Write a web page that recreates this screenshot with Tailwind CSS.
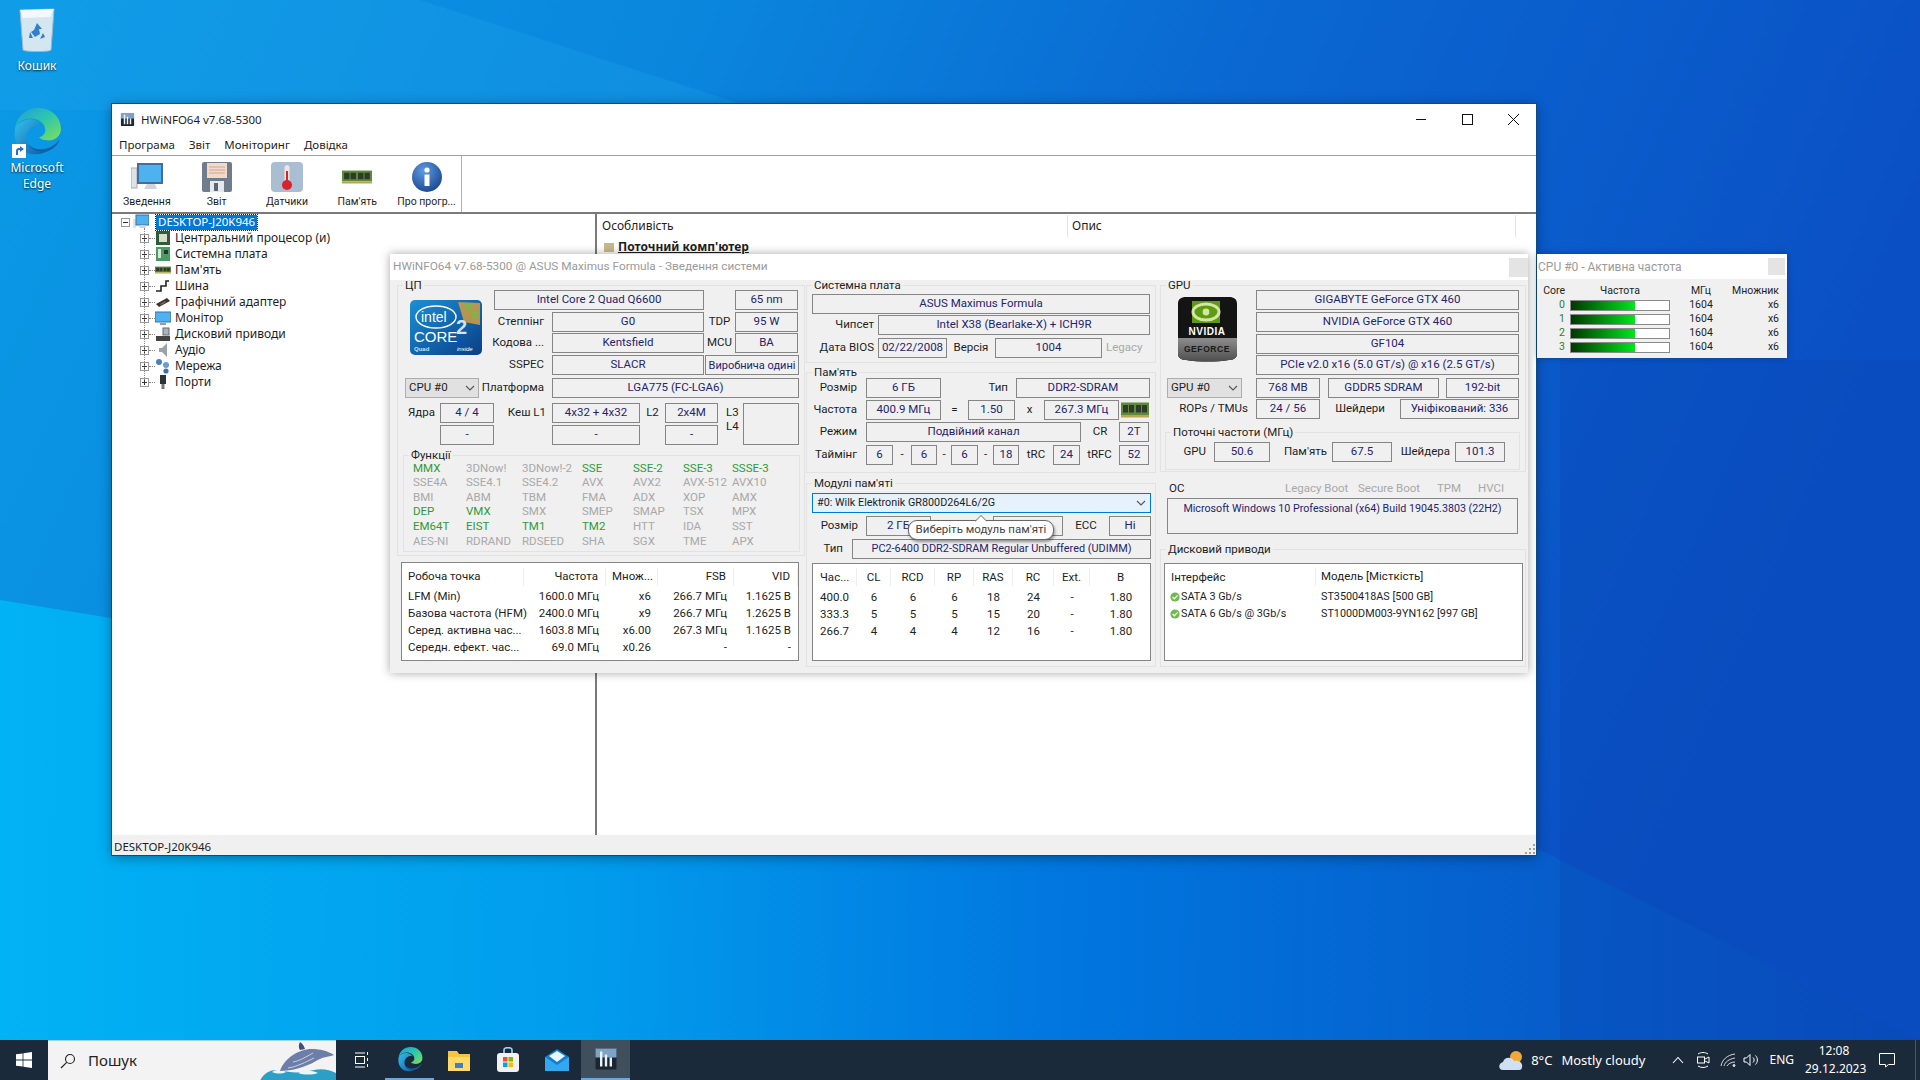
<!DOCTYPE html>
<html>
<head>
<meta charset="UTF-8">
<title>HWiNFO64</title>
<script src="https://cdn.jsdelivr.net/npm/@tailwindcss/browser@4"></script>
</head>
<body class="relative w-[1920px] h-[1080px] overflow-hidden font-['Noto_Sans',sans-serif] text-[12px] leading-none text-[#1e1e1e] bg-[#0a6fd6]">

<!-- shared svg symbols -->
<svg class="absolute w-0 h-0">
  <defs>
    <linearGradient id="edgeA" x1="0" y1="0" x2="1" y2="1"><stop offset="0" stop-color="#35c1f1"/><stop offset="1" stop-color="#0c59a4"/></linearGradient>
    <linearGradient id="edgeB" x1="0" y1="0" x2="1" y2="1"><stop offset="0" stop-color="#1b9de2"/><stop offset=".5" stop-color="#30c7a8"/><stop offset="1" stop-color="#7fe05a"/></linearGradient>
    <symbol id="edge" viewBox="0 0 48 48">
      <path fill="url(#edgeB)" d="M3 21C5 9 14 2 25 2c13 0 22 9 22 20 0 7-6 11-12 11-4 0-8-1-9-3 4-1 6-4 6-7 0-6-6-11-14-11C12 12 6 15 3 21z"/>
      <path fill="url(#edgeA)" d="M3 21c-2 10 2 20 11 24 6 2 13 2 19-1-8 1-15-2-18-8-3-7 0-14 7-17 2-1 5-1 7 0-3-5-9-7-14-6-5 1-10 4-12 8z"/>
      <path fill="#1261a8" d="M33 44c-8 1-15-2-18-8 3 4 10 7 17 5 6-1 10-4 14-9-2 6-7 10-13 12z"/>
    </symbol>
    <symbol id="hw" viewBox="0 0 16 16">
      <rect x="1" y="1" width="14" height="14" rx="1" fill="#1c2530"/>
      <rect x="1" y="1" width="14" height="6" fill="#7ea4c4"/>
      <path fill="#eaf2fa" d="M4 3h1.600v10H4zM7.200 5h1.600v8H7.200zM10.400 7H12v6h-1.600z"/>
    </symbol>
    <symbol id="ram" viewBox="0 0 28 16">
      <rect x="0" y="2" width="28" height="10" fill="#5f8a3c"/>
      <path fill="#2f3b2a" d="M2 4h5v6H2zM8 4h5v6H8zM15 4h5v6h-5zM21 4h5v6h-5z"/>
      <path fill="#b9a650" d="M0 12h28v2H0z"/>
    </symbol>
    <symbol id="check" viewBox="0 0 10 10">
      <circle cx="5" cy="5" r="4.600" fill="#6dbb4a"/>
      <path d="M2.600 5l1.800 1.800L7.600 3.400" fill="none" stroke="#fff" stroke-width="1.300"/>
    </symbol>
    <symbol id="plus" viewBox="0 0 9 9">
      <rect x=".5" y=".5" width="8" height="8" fill="#fff" stroke="#9a9a9a"/>
      <path d="M2 4.500h5M4.500 2v5" stroke="#333"/>
    </symbol>
    <symbol id="chev" viewBox="0 0 10 6">
      <path d="M1 1l4 4 4-4" fill="none" stroke="#555" stroke-width="1.100"/>
    </symbol>
  </defs>
</svg>

<!-- wallpaper -->
<svg class="absolute inset-0" width="1920" height="1080" viewBox="0 0 1920 1080">
  <defs>
    <linearGradient id="wall" x1="0" y1="0" x2="1" y2="0.25">
      <stop offset="0" stop-color="#0a9ae6"/>
      <stop offset=".35" stop-color="#0a86dd"/>
      <stop offset=".62" stop-color="#0a68d2"/>
      <stop offset="1" stop-color="#0a4fc4"/>
    </linearGradient>
    <linearGradient id="low" x1="0" y1="0" x2="1" y2="0">
      <stop offset="0" stop-color="#00b4f5"/>
      <stop offset=".3" stop-color="#009fee"/>
      <stop offset=".55" stop-color="#0078e0"/>
      <stop offset="1" stop-color="#0a4cbc" stop-opacity=".9"/>
    </linearGradient>
  </defs>
  <rect width="1920" height="1080" fill="url(#wall)"/>
  <polygon points="0,600 1540,850 1920,1040 0,1040" fill="url(#low)" opacity=".95"/>
  <polygon points="0,0 420,0 760,110 0,110" fill="#22a6ec" opacity=".25"/>
  <polygon points="1560,360 1920,360 1920,1040 1560,1040" fill="#0a47b6" opacity=".35"/>
</svg>

<!-- desktop icons -->
<div class="absolute left-0 top-[6px] w-[74px] flex flex-col items-center text-white [text-shadow:0_1px_2px_rgba(0,0,0,.8)]">
  <svg width="40" height="48" viewBox="0 0 40 48">
    <path d="M3 4l34-1-3 41c-1 2-26 2-28 0z" fill="#d4e6f2" stroke="#9fb8c9"/>
    <path d="M3 4l34-1-4 8-27 1z" fill="#f2f8fc"/>
    <path d="M20 17l5 6h-3l1 5-5 3-4-5 3-2zM13 26l3 6h-4zM26 27l2 4-5 2z" fill="#2f82c9"/>
  </svg>
  <span class="mt-[6px] text-[12px]">Кошик</span>
</div>
<div class="absolute left-0 top-[106px] w-[74px] flex flex-col items-center text-white [text-shadow:0_1px_2px_rgba(0,0,0,.8)]">
  <div class="relative w-[50px] h-[50px]">
    <svg class="w-[50px] h-[50px]"><use href="#edge"/></svg>
    <svg class="absolute left-[0px] bottom-[-2px]" width="14" height="14" viewBox="0 0 14 14"><rect width="14" height="14" fill="#fff"/><path d="M4 11V7c0-2 1-3 3-3h1V2l4 3-4 3V6H7c-1 0-1 1-1 2v3z" fill="#2a6fc4"/></svg>
  </div>
  <span class="mt-[4px] text-center leading-[16px]">Microsoft<br>Edge</span>
</div>

<!-- main window -->
<div class="absolute left-[112px] top-[104px] w-[1424px] h-[751px] bg-white shadow-[0_0_0_1px_#0a4a8a,0_2px_12px_rgba(0,0,0,.4)] flex flex-col">
  <div class="h-[31px] flex items-center shrink-0">
    <svg class="ml-[8px] w-[15px] h-[15px]"><use href="#hw"/></svg>
    <span class="ml-[6px] text-[11.500px]">HWiNFO64 v7.68-5300</span>
    <div class="ml-auto flex items-center">
      <svg width="46" height="31" viewBox="0 0 46 31"><path d="M18 15.500h10" stroke="#111"/></svg>
      <svg width="46" height="31" viewBox="0 0 46 31"><rect x="18.500" y="10.500" width="10" height="10" fill="none" stroke="#111"/></svg>
      <svg width="46" height="31" viewBox="0 0 46 31"><path d="M18 10l11 11M29 10L18 21" stroke="#111"/></svg>
    </div>
  </div>
  <div class="h-[20px] flex items-center gap-[14px] pl-[7px] border-b border-[#a0a0a0] shrink-0 box-content text-[11.500px]">
    <span>Програма</span><span>Звіт</span><span>Моніторинг</span><span>Довідка</span>
  </div>
  <div class="h-[56px] flex shrink-0 border-b-2 border-[#7a7a7a] box-content">
    <div class="w-[350px] flex border-r border-[#b0b0b0] font-['Roboto',sans-serif] text-[10.500px] pt-[6px]">
      <div class="w-[70px] flex flex-col items-center">
        <svg width="32" height="30" viewBox="0 0 32 30"><rect x="0" y="6" width="6" height="20" fill="#dfe3e6" stroke="#aab"/><rect x="6" y="1" width="26" height="21" fill="#3f6f9f"/><rect x="8" y="3" width="22" height="17" fill="#4eb1f0"/><path d="M16 22h8l2 5H13z" fill="#cfd4d8"/></svg>
        <span class="mt-[5px]">Зведення</span>
      </div>
      <div class="w-[70px] flex flex-col items-center">
        <svg width="30" height="30" viewBox="0 0 30 30"><rect width="30" height="30" rx="2" fill="#6f7c8c"/><rect x="5" y="1" width="20" height="15" fill="#f4d9c8"/><path d="M7 5h16M7 8h16M7 11h16" stroke="#c9a999"/><rect x="8" y="19" width="14" height="11" fill="#e6e9ec"/><rect x="12" y="21" width="4" height="8" fill="#5a6674"/></svg>
        <span class="mt-[5px]">Звіт</span>
      </div>
      <div class="w-[71px] flex flex-col items-center">
        <svg width="32" height="30" viewBox="0 0 32 30"><rect width="32" height="30" rx="4" fill="#a9bed2"/><rect x="13.500" y="3" width="5" height="18" rx="2.500" fill="#f1e4e0"/><rect x="15" y="9" width="2" height="12" fill="#d8232a"/><circle cx="16" cy="23" r="5" fill="#d8232a"/></svg>
        <span class="mt-[5px]">Датчики</span>
      </div>
      <div class="w-[70px] flex flex-col items-center">
        <svg class="w-[30px] h-[30px]" viewBox="0 0 28 16"><use href="#ram" width="28" height="16"/></svg>
        <span class="mt-[5px]">Пам'ять</span>
      </div>
      <div class="w-[69px] flex flex-col items-center">
        <svg width="30" height="30" viewBox="0 0 30 30"><defs><radialGradient id="infoG" cx=".4" cy=".3" r=".8"><stop offset="0" stop-color="#5f9be0"/><stop offset="1" stop-color="#163f8c"/></radialGradient></defs><circle cx="15" cy="15" r="15" fill="url(#infoG)"/><circle cx="15" cy="8" r="2.600" fill="#fff"/><path d="M12.500 12.500h5V24h-5z" fill="#fff"/></svg>
        <span class="mt-[5px]">Про прогр...</span>
      </div>
    </div>
  </div>
  <div class="flex-1 flex min-h-0">
    <!-- tree -->
    <div class="relative w-[483px] border-r-2 border-[#7a7a7a] box-content">
      <div class="absolute left-[32px] top-[14px] h-[152px] border-l border-dotted border-[#888]"></div>
      <div class="h-[16px] flex items-center pl-[9px]">
        <svg width="9" height="9"><rect x=".5" y=".5" width="8" height="8" fill="#fff" stroke="#9a9a9a"/><path d="M2 4.500h5" stroke="#333"/></svg>
        <svg class="ml-[3px]" width="16" height="16" viewBox="0 0 16 16"><rect x="0" y="5" width="3" height="9" fill="#dfe3e6"/><rect x="3" y="1" width="13" height="10" fill="#4eb1f0" stroke="#3f6f9f"/><path d="M7 11h5l1 3H6z" fill="#cfd4d8"/></svg>
        <span class="ml-[7px] px-[2px] h-[15px] flex items-center bg-[#0078d7] text-white outline-1 outline-dotted outline-[#222] text-[11.500px]">DESKTOP-J20K946</span>
      </div>
      <div class="h-[16px] flex items-center pl-[28px]"><svg class="w-[9px] h-[9px]"><use href="#plus"/></svg><span class="w-[6px] border-t border-dotted border-[#888]"></span>
        <svg width="16" height="16" viewBox="0 0 16 16"><rect x="1" y="1" width="14" height="14" fill="#2f5d3a"/><rect x="4" y="4" width="8" height="8" fill="#d9dcc8"/></svg><span class="ml-[4px]">Центральний процесор (и)</span></div>
      <div class="h-[16px] flex items-center pl-[28px]"><svg class="w-[9px] h-[9px]"><use href="#plus"/></svg><span class="w-[6px] border-t border-dotted border-[#888]"></span>
        <svg width="16" height="16" viewBox="0 0 16 16"><rect x="1" y="1" width="14" height="14" fill="#4c9a63"/><rect x="3" y="3" width="3" height="9" fill="#d9e6d8"/><rect x="9" y="4" width="4" height="4" fill="#22382a"/></svg><span class="ml-[4px]">Системна плата</span></div>
      <div class="h-[16px] flex items-center pl-[28px]"><svg class="w-[9px] h-[9px]"><use href="#plus"/></svg><span class="w-[6px] border-t border-dotted border-[#888]"></span>
        <svg class="w-[16px] h-[16px]" viewBox="0 0 28 16"><use href="#ram" width="28" height="16"/></svg><span class="ml-[4px]">Пам'ять</span></div>
      <div class="h-[16px] flex items-center pl-[28px]"><svg class="w-[9px] h-[9px]"><use href="#plus"/></svg><span class="w-[6px] border-t border-dotted border-[#888]"></span>
        <svg width="16" height="16" viewBox="0 0 16 16"><path d="M1 13h5V8h5V3h3" fill="none" stroke="#222" stroke-width="1.600"/></svg><span class="ml-[4px]">Шина</span></div>
      <div class="h-[16px] flex items-center pl-[28px]"><svg class="w-[9px] h-[9px]"><use href="#plus"/></svg><span class="w-[6px] border-t border-dotted border-[#888]"></span>
        <svg width="16" height="16" viewBox="0 0 16 16"><path d="M1 10l11-6 3 3-11 6z" fill="#3a3436"/><path d="M5 10l5-3 1 1-5 3z" fill="#8a6a4a"/></svg><span class="ml-[4px]">Графічний адаптер</span></div>
      <div class="h-[16px] flex items-center pl-[28px]"><svg class="w-[9px] h-[9px]"><use href="#plus"/></svg><span class="w-[6px] border-t border-dotted border-[#888]"></span>
        <svg width="16" height="16" viewBox="0 0 16 16"><rect x="0" y="2" width="16" height="10" fill="#4eb1f0" stroke="#3f6f9f"/><path d="M5 13h6v2H5z" fill="#8fa0ae"/></svg><span class="ml-[4px]">Монітор</span></div>
      <div class="h-[16px] flex items-center pl-[28px]"><svg class="w-[9px] h-[9px]"><use href="#plus"/></svg><span class="w-[6px] border-t border-dotted border-[#888]"></span>
        <svg width="16" height="16" viewBox="0 0 16 16"><rect x="1" y="10" width="14" height="5" fill="#444"/><rect x="8" y="2" width="6" height="7" fill="#aab4be" stroke="#667"/></svg><span class="ml-[4px]">Дисковий приводи</span></div>
      <div class="h-[16px] flex items-center pl-[28px]"><svg class="w-[9px] h-[9px]"><use href="#plus"/></svg><span class="w-[6px] border-t border-dotted border-[#888]"></span>
        <svg width="16" height="16" viewBox="0 0 16 16"><path d="M4 6h3l5-5v14l-5-5H4z" fill="#9aa3a9"/></svg><span class="ml-[4px]">Аудіо</span></div>
      <div class="h-[16px] flex items-center pl-[28px]"><svg class="w-[9px] h-[9px]"><use href="#plus"/></svg><span class="w-[6px] border-t border-dotted border-[#888]"></span>
        <svg width="16" height="16" viewBox="0 0 16 16"><circle cx="4" cy="4" r="3" fill="#4a7fc0"/><circle cx="11" cy="7" r="3" fill="#6a9bd4"/><circle cx="11" cy="13" r="2.600" fill="#3f6fae"/></svg><span class="ml-[4px]">Мережа</span></div>
      <div class="h-[16px] flex items-center pl-[28px]"><svg class="w-[9px] h-[9px]"><use href="#plus"/></svg><span class="w-[6px] border-t border-dotted border-[#888]"></span>
        <svg width="16" height="16" viewBox="0 0 16 16"><rect x="5" y="1" width="6" height="9" fill="#2e3338"/><path d="M6.500 10h3v5h-3z" fill="#777"/></svg><span class="ml-[4px]">Порти</span></div>
    </div>
    <!-- right pane -->
    <div class="flex-1">
      <div class="h-[23px] flex items-center">
        <span class="w-[471px] pl-[5px] h-[22px] flex items-center border-r border-[#e3e3e3]">Особливість</span>
        <span class="w-[448px] pl-[4px] h-[22px] flex items-center border-r border-[#e3e3e3]">Опис</span>
      </div>
      <div class="flex items-center pl-[7px] h-[16px] mt-[2px]">
        <span class="w-[10px] h-[9px] bg-[#c9b98a]"></span>
        <span class="ml-[4px] font-bold text-[12px] underline">Поточний комп'ютер</span>
      </div>
    </div>
  </div>
  <div class="relative h-[20px] bg-[#f0f0f0] flex items-center pl-[2px] pt-[3px] shrink-0 text-[11.500px]">DESKTOP-J20K946
    <svg class="absolute right-[1px] bottom-[1px]" width="10" height="10" viewBox="0 0 10 10" fill="#a0a0a0"><path d="M8 0h2v2H8zM4 4h2v2H4zM8 4h2v2H8zM0 8h2v2H0zM4 8h2v2H4zM8 8h2v2H8z"/></svg>
  </div>
</div>

<!-- summary dialog -->
<div class="absolute left-[390px] top-[254px] w-[1138px] h-[419px] bg-[#f0f0f0] shadow-[0_0_9px_rgba(0,0,0,.35)] font-['Roboto',sans-serif] text-[11.500px]
  [&_.f]:h-[20px] [&_.f]:shrink-0 [&_.f]:border [&_.f]:border-[#858585] [&_.f]:flex [&_.f]:items-center [&_.f]:justify-center [&_.f]:text-[#24246e] [&_.f]:whitespace-nowrap [&_.f]:overflow-hidden
  [&_.r]:flex [&_.r]:items-center [&_.r]:h-[20px]
  [&_.g]:relative [&_.g]:border [&_.g]:border-[#e2e2e2]
  [&_.t]:absolute [&_.t]:-top-[6px] [&_.t]:left-[5px] [&_.t]:px-[2px] [&_.t]:bg-[#f0f0f0]
  [&_.l]:shrink-0 [&_.l]:whitespace-nowrap">
  <div class="h-[26px] bg-white flex items-center pl-[3px] text-[#9a9a9a] text-[11.800px]">
    <span>HWiNFO64 v7.68-5300 @ ASUS Maximus Formula - Зведення системи</span>
    <span class="ml-auto mr-[0px] w-[19px] h-[19px] bg-[#e4e4e4]"></span>
  </div>
  <div class="flex pl-[7px]">

    <!-- CPU column -->
    <div class="w-[408px] pt-[5px]">
      <div class="g h-[271px] pt-[4px]">
        <span class="t">ЦП</span>
        <div class="flex">
          <svg class="ml-[12px] mt-[10px]" width="72" height="55" viewBox="0 0 72 55">
            <defs><linearGradient id="cg" x1="0" y1="0" x2="1" y2="1"><stop offset="0" stop-color="#1a8fd8"/><stop offset="1" stop-color="#0a3f86"/></linearGradient></defs>
            <rect width="72" height="55" rx="5" fill="url(#cg)"/>
            <path d="M48 2l22 1v22l-16-3z" fill="#e0a13a" opacity=".8"/>
            <path d="M56 4h6v6h-6zM62 12h6v6h-6z" fill="#7ab648"/>
            <ellipse cx="26" cy="17" rx="20" ry="11" fill="none" stroke="#fff" stroke-width="1.400"/>
            <text x="11" y="22" fill="#fff" font-size="14" font-family="Liberation Sans">intel</text>
            <text x="4" y="42" fill="#fff" font-size="15" font-family="Liberation Sans">CORE</text>
            <text x="46" y="34" fill="#cfe3f4" font-size="20" font-family="Liberation Sans" font-weight="bold">2</text>
            <text x="4" y="51" fill="#bfe0f6" font-size="6" font-family="Liberation Sans" font-weight="bold">Quad</text>
            <text x="47" y="51" fill="#fff" font-size="6" font-family="Liberation Sans" font-style="italic">inside</text>
          </svg>
          <div class="ml-[5px]">
            <div class="r"><div class="f ml-[7px] w-[210px]">Intel Core 2 Quad Q6600</div><div class="f ml-[31px] w-[63px]">65 nm</div></div>
            <div class="r mt-[2px]"><span class="l w-[57px] text-right">Степпінг</span><div class="f ml-[8px] w-[152px]">G0</div><span class="l w-[31px] text-center">TDP</span><div class="f w-[63px]">95 W</div></div>
            <div class="r mt-[1px]"><span class="l w-[57px] text-right">Кодова ...</span><div class="f ml-[8px] w-[152px]">Kentsfield</div><span class="l w-[31px] text-center">MCU</span><div class="f w-[63px]">BA</div></div>
            <div class="r mt-[2px]"><span class="l w-[57px] text-right">SSPEC</span><div class="f ml-[8px] w-[152px]">SLACR</div><div class="f ml-[1px] w-[94px] text-[11px]">Виробнича одині</div></div>
          </div>
        </div>
        <div class="r mt-[3px]">
          <div class="ml-[7px] w-[74px] h-[20px] shrink-0 bg-[#e1e1e1] border border-[#adadad] flex items-center justify-between px-[3px]"><span>CPU #0</span><svg class="w-[10px] h-[6px]"><use href="#chev"/></svg></div>
          <span class="l w-[65px] text-right">Платформа</span>
          <div class="f ml-[8px] w-[247px]">LGA775 (FC-LGA6)</div>
        </div>
        <div class="flex mt-[5px]">
          <div>
            <div class="r"><span class="l w-[42px] pl-[10px]">Ядра</span><div class="f w-[54px]">4 / 4</div><span class="l w-[52px] text-right">Кеш L1</span><div class="f ml-[6px] w-[88px]">4x32 + 4x32</div><span class="l w-[25px] text-center">L2</span><div class="f w-[53px]">2x4M</div></div>
            <div class="r mt-[2px]"><div class="f ml-[42px] w-[54px] text-[#777]">-</div><div class="f ml-[58px] w-[88px]">-</div><div class="f ml-[25px] w-[53px]">-</div></div>
          </div>
          <div class="ml-[8px] w-[17px] leading-[14px] pt-[2px]">L3<br>L4</div>
          <div class="w-[56px] h-[42px] border border-[#858585]"></div>
        </div>
        <div class="g ml-[5px] mt-[10px] w-[397px] h-[97px] pt-[5px] pl-[9px]">
          <span class="t">Функції</span>
          <div class="grid grid-cols-[53px_56px_60px_51px_50px_49px_50px] auto-rows-[14.600px] items-center text-[#a8a8a8] whitespace-nowrap">
            <span class="text-[#2e9a3a]">MMX</span><span>3DNow!</span><span>3DNow!-2</span><span class="text-[#2e9a3a]">SSE</span><span class="text-[#2e9a3a]">SSE-2</span><span class="text-[#2e9a3a]">SSE-3</span><span class="text-[#2e9a3a]">SSSE-3</span>
            <span>SSE4A</span><span>SSE4.1</span><span>SSE4.2</span><span>AVX</span><span>AVX2</span><span>AVX-512</span><span>AVX10</span>
            <span>BMI</span><span>ABM</span><span>TBM</span><span>FMA</span><span>ADX</span><span>XOP</span><span>AMX</span>
            <span class="text-[#2e9a3a]">DEP</span><span class="text-[#2e9a3a]">VMX</span><span>SMX</span><span>SMEP</span><span>SMAP</span><span>TSX</span><span>MPX</span>
            <span class="text-[#2e9a3a]">EM64T</span><span class="text-[#2e9a3a]">EIST</span><span class="text-[#2e9a3a]">TM1</span><span class="text-[#2e9a3a]">TM2</span><span>HTT</span><span>IDA</span><span>SST</span>
            <span>AES-NI</span><span>RDRAND</span><span>RDSEED</span><span>SHA</span><span>SGX</span><span>TME</span><span>APX</span>
          </div>
        </div>
      </div>
      <div class="ml-[4px] mt-[6px] w-[398px] h-[99px] bg-white border border-[#858585] pt-[5px]">
        <div class="grid grid-cols-[122px_82px_52px_76px_64px] h-[18px] items-center mb-[2px] [&>span]:border-r [&>span]:border-[#eeeeee] [&>span]:h-[18px] [&>span]:flex [&>span]:items-center [&>span]:justify-end [&>span]:pr-[7px]">
          <span class="!justify-start pl-[6px]">Робоча точка</span><span>Частота</span><span class="!justify-start pl-[6px]">Множ...</span><span>FSB</span><span class="border-r-0 pr-[9px]">VID</span>
        </div>
        <div class="grid grid-cols-[122px_82px_52px_76px_64px] auto-rows-[17px] items-center [&>span]:text-right [&>span]:pr-[7px] [&>span]:whitespace-nowrap">
          <span class="!text-left pl-[6px]">LFM (Min)</span><span>1600.0 МГц</span><span>x6</span><span>266.7 МГц</span><span>1.1625 В</span>
          <span class="!text-left pl-[6px]">Базова частота (HFM)</span><span>2400.0 МГц</span><span>x9</span><span>266.7 МГц</span><span>1.2625 В</span>
          <span class="!text-left pl-[6px]">Серед. активна час...</span><span>1603.8 МГц</span><span>x6.00</span><span>267.3 МГц</span><span>1.1625 В</span>
          <span class="!text-left pl-[6px]">Середн. ефект. час...</span><span>69.0 МГц</span><span>x0.26</span><span>-</span><span>-</span>
        </div>
      </div>
    </div>

    <!-- board + memory column -->
    <div class="ml-[1px] w-[350px] pt-[5px]">
      <div class="g h-[78px] pt-[8px]">
        <span class="t">Системна плата</span>
        <div class="r"><div class="f ml-[5px] w-[338px]">ASUS Maximus Formula</div></div>
        <div class="r mt-[1px]"><span class="l w-[67px] text-right">Чипсет</span><div class="f ml-[4px] w-[272px]">Intel X38 (Bearlake-X) + ICH9R</div></div>
        <div class="r mt-[3px]"><span class="l w-[67px] text-right">Дата BIOS</span><div class="f ml-[4px] w-[69px]">02/22/2008</div><span class="l w-[48px] text-center">Версія</span><div class="f w-[107px]">1004</div><span class="l ml-[4px] text-[#a8a8a8]">Legacy</span></div>
      </div>
      <div class="g mt-[9px] h-[101px] pt-[5px]">
        <span class="t">Пам'ять</span>
        <div class="r"><span class="l w-[50px] text-right">Розмір</span><div class="f ml-[9px] w-[75px]">6 ГБ</div><span class="l w-[67px] text-right">Тип</span><div class="f ml-[8px] w-[134px]">DDR2-SDRAM</div></div>
        <div class="r mt-[2px]"><span class="l w-[50px] text-right">Частота</span><div class="f ml-[9px] w-[75px]">400.9 МГц</div><span class="l w-[27px] text-center">=</span><div class="f w-[47px]">1.50</div><span class="l w-[29px] text-center">x</span><div class="f w-[75px]">267.3 МГц</div><svg class="ml-[2px] w-[28px] h-[20px]" viewBox="0 0 28 16" preserveAspectRatio="none"><use href="#ram" width="28" height="16"/></svg></div>
        <div class="r mt-[2px]"><span class="l w-[50px] text-right">Режим</span><div class="f ml-[9px] w-[215px]">Подвійний канал</div><span class="l w-[38px] text-center">CR</span><div class="f w-[30px]">2T</div></div>
        <div class="r mt-[3px]"><span class="l w-[50px] text-right">Таймінг</span><div class="f ml-[9px] w-[27px]">6</div><span class="l w-[18px] text-center">-</span><div class="f w-[26px]">6</div><span class="l w-[14px] text-center">-</span><div class="f w-[27px]">6</div><span class="l w-[15px] text-center">-</span><div class="f w-[26px]">18</div><span class="l w-[34px] text-center">tRC</span><div class="f w-[27px]">24</div><span class="l w-[39px] text-center">tRFC</span><div class="f w-[30px]">52</div></div>
      </div>
      <div class="g mt-[10px] h-[184px] pt-[9px]">
        <span class="t">Модулі пам'яті</span>
        <div class="relative ml-[5px] w-[339px] h-[20px] bg-[#e5f1fb] border border-[#0078d7] flex items-center justify-between px-[4px]"><span class="text-[#1e1e1e] text-[10.800px]">#0: Wilk Elektronik GR800D264L6/2G</span><svg class="w-[10px] h-[6px]"><use href="#chev"/></svg></div>
        <div class="r mt-[3px]"><span class="l w-[51px] text-right">Розмір</span><div class="f ml-[8px] w-[65px]">2 ГБ</div><div class="f ml-[62px] w-[70px]"></div><span class="l w-[46px] text-center">ECC</span><div class="f w-[42px]">Ні</div></div>
        <div class="r mt-[3px]"><span class="l w-[36px] text-right">Тип</span><div class="f ml-[9px] w-[299px] text-[10.900px]">PC2-6400 DDR2-SDRAM Regular Unbuffered (UDIMM)</div></div>
        <div class="ml-[5px] mt-[4px] w-[339px] h-[98px] bg-white border border-[#858585] pt-[4px]">
          <div class="grid grid-cols-[44px_34px_44px_39px_39px_41px_36px_62px] h-[18px] items-center mb-[3px] text-center [&>span]:border-r [&>span]:border-[#eeeeee] [&>span]:leading-[18px]">
            <span class="text-left pl-[7px]">Час...</span><span>CL</span><span>RCD</span><span>RP</span><span>RAS</span><span>RC</span><span>Ext.</span><span class="border-r-0">В</span>
          </div>
          <div class="grid grid-cols-[44px_34px_44px_39px_39px_41px_36px_62px] auto-rows-[17px] items-center text-center">
            <span class="text-left pl-[7px]">400.0</span><span>6</span><span>6</span><span>6</span><span>18</span><span>24</span><span>-</span><span>1.80</span>
            <span class="text-left pl-[7px]">333.3</span><span>5</span><span>5</span><span>5</span><span>15</span><span>20</span><span>-</span><span>1.80</span>
            <span class="text-left pl-[7px]">266.7</span><span>4</span><span>4</span><span>4</span><span>12</span><span>16</span><span>-</span><span>1.80</span>
          </div>
        </div>
      </div>
    </div>

    <!-- GPU column -->
    <div class="ml-[4px] w-[366px] pt-[5px]">
      <div class="g h-[187px] pt-[4px]">
        <span class="t">GPU</span>
        <div class="flex">
          <svg class="ml-[14px] mt-[6px]" width="65" height="66" viewBox="0 0 65 66">
            <defs><linearGradient id="ng" x1="0" y1="0" x2="0" y2="1"><stop offset="0" stop-color="#8d8d8d"/><stop offset="1" stop-color="#4e4e4e"/></linearGradient></defs>
            <path d="M3 8C3 3 6 1 11 1h43c5 0 8 2 8 7v50c0 4-4 6-8 6-12 2-31 2-43 0-4 0-8-2-8-6z" fill="#141414"/>
            <path d="M3 42h59v16c0 4-4 6-8 6-12 2-31 2-43 0-4 0-8-2-8-6z" fill="url(#ng)"/>
            <path d="M17 5h28v22H17z" fill="#5e9a12"/>
            <ellipse cx="31" cy="16" rx="13" ry="8" fill="none" stroke="#d2e6a5" stroke-width="3"/>
            <circle cx="31" cy="16" r="3.400" fill="#d2e6a5"/>
            <text x="32" y="39" text-anchor="middle" fill="#fff" font-size="10" font-weight="bold" font-family="Liberation Sans" letter-spacing=".5">NVIDIA</text>
            <text x="32" y="56" text-anchor="middle" fill="#1a1a1a" font-size="8.500" font-weight="bold" font-family="Liberation Sans" letter-spacing=".6">GEFORCE</text>
          </svg>
          <div class="ml-[16px]">
            <div class="f w-[263px]">GIGABYTE GeForce GTX 460</div>
            <div class="f w-[263px] mt-[2px]">NVIDIA GeForce GTX 460</div>
            <div class="f w-[263px] mt-[2px]">GF104</div>
            <div class="f w-[263px] mt-[1px]">PCIe v2.0 x16 (5.0 GT/s) @ x16 (2.5 GT/s)</div>
          </div>
        </div>
        <div class="r mt-[3px]">
          <div class="ml-[6px] w-[75px] h-[20px] shrink-0 bg-[#e1e1e1] border border-[#adadad] flex items-center justify-between px-[3px]"><span>GPU #0</span><svg class="w-[10px] h-[6px]"><use href="#chev"/></svg></div>
          <div class="f ml-[14px] w-[64px]">768 MB</div><div class="f ml-[8px] w-[111px]">GDDR5 SDRAM</div><div class="f ml-[7px] w-[73px]">192-bit</div>
        </div>
        <div class="r mt-[1px]"><span class="l w-[87px] text-right">ROPs / TMUs</span><div class="f ml-[8px] w-[64px]">24 / 56</div><span class="l w-[80px] text-center">Шейдери</span><div class="f w-[119px]">Уніфікований: 336</div></div>
        <div class="g ml-[4px] mt-[13px] w-[355px] h-[38px] pt-[9px]">
          <span class="t">Поточні частоти (МГц)</span>
          <div class="r"><span class="l w-[48px] text-right pr-[8px]">GPU</span><div class="f w-[56px]">50.6</div><span class="l w-[62px] text-right pr-[5px]">Пам'ять</span><div class="f w-[60px]">67.5</div><span class="l w-[63px] text-right pr-[5px]">Шейдера</span><div class="f w-[50px]">101.3</div></div>
        </div>
      </div>
      <div class="h-[18px] mt-[8px] flex items-center">
        <span class="l w-[125px] pl-[9px]">ОС</span>
        <span class="l w-[73px] text-[#a8a8a8]">Legacy Boot</span><span class="l w-[79px] text-[#a8a8a8]">Secure Boot</span><span class="l w-[41px] text-[#a8a8a8]">TPM</span><span class="l text-[#a8a8a8]">HVCI</span>
      </div>
      <div class="f !h-[36px] ml-[7px] w-[351px] !items-start pt-[5px] text-[10.700px]">Microsoft Windows 10 Professional (x64) Build 19045.3803 (22H2)</div>
      <div class="g mt-[15px] h-[118px] pt-[13px]">
        <span class="t">Дисковий приводи</span>
        <div class="ml-[3px] w-[359px] h-[98px] bg-white border border-[#858585] pt-[4px]">
          <div class="flex h-[18px] items-center mb-[3px]"><span class="w-[151px] pl-[6px] leading-[18px] border-r border-[#eeeeee]">Інтерфейс</span><span class="pl-[5px]">Модель [Місткість]</span></div>
          <div class="grid grid-cols-[151px_1fr] auto-rows-[17px] items-center whitespace-nowrap text-[10.800px]">
            <span class="flex items-center pl-[5px]"><svg class="w-[10px] h-[10px] mr-[1px]"><use href="#check"/></svg>SATA 3 Gb/s</span><span class="pl-[5px]">ST3500418AS [500 GB]</span>
            <span class="flex items-center pl-[5px]"><svg class="w-[10px] h-[10px] mr-[1px]"><use href="#check"/></svg>SATA 6 Gb/s @ 3Gb/s</span><span class="pl-[5px]">ST1000DM003-9YN162 [997 GB]</span>
          </div>
        </div>
      </div>
    </div>
  </div>

  <!-- tooltip over the memory module row -->
  <div class="absolute left-[518px] top-[266px] w-[146px] h-[20px] bg-white border border-[#666] rounded-[9px] shadow-[1px_2px_3px_rgba(0,0,0,.4)] flex items-center justify-center text-[#444] whitespace-nowrap">Виберіть модуль пам'яті
    <svg class="absolute left-[66px] -top-[6px]" width="12" height="7" viewBox="0 0 12 7"><path d="M0 6.500L6 .5l6 6" fill="#fff" stroke="#666"/></svg>
  </div>
</div>

<!-- sensor window -->
<div class="absolute left-[1537px] top-[254px] w-[250px] h-[104px] bg-[#f0f0f0] shadow-[0_0_6px_rgba(0,0,0,.3)] font-['Roboto',sans-serif] text-[10.500px]">
  <div class="h-[25px] bg-white flex items-center pl-[1px] text-[12px] text-[#9a9a9a]">CPU #0 - Активна частота<span class="ml-auto mr-[2px] w-[17px] h-[17px] bg-[#e4e4e4]"></span></div>
  <div class="grid grid-cols-[28px_105px_58px_1fr] auto-rows-[14px] items-center pr-[8px] pt-[5px]">
    <span class="text-right">Core</span><span class="text-center pl-[5px]">Частота</span><span class="text-center pl-[4px]">МГц</span><span class="text-right">Множник</span>
    <span class="text-right text-[#2e7d32]">0</span><span class="ml-[5px] w-[100px] h-[11px] bg-white border border-[#8a8a8a]"><span class="block w-[65%] h-full bg-[linear-gradient(90deg,#003800,#00e61e)]"></span></span><span class="text-center pl-[4px]">1604</span><span class="text-right">x6</span>
    <span class="text-right text-[#2e7d32]">1</span><span class="ml-[5px] w-[100px] h-[11px] bg-white border border-[#8a8a8a]"><span class="block w-[65%] h-full bg-[linear-gradient(90deg,#003800,#00e61e)]"></span></span><span class="text-center pl-[4px]">1604</span><span class="text-right">x6</span>
    <span class="text-right text-[#2e7d32]">2</span><span class="ml-[5px] w-[100px] h-[11px] bg-white border border-[#8a8a8a]"><span class="block w-[65%] h-full bg-[linear-gradient(90deg,#003800,#00e61e)]"></span></span><span class="text-center pl-[4px]">1604</span><span class="text-right">x6</span>
    <span class="text-right text-[#2e7d32]">3</span><span class="ml-[5px] w-[100px] h-[11px] bg-white border border-[#8a8a8a]"><span class="block w-[65%] h-full bg-[linear-gradient(90deg,#003800,#00e61e)]"></span></span><span class="text-center pl-[4px]">1604</span><span class="text-right">x6</span>
  </div>
</div>

<!-- taskbar -->
<div class="absolute left-0 bottom-0 w-full h-[40px] bg-[#1b2a3a] flex items-center text-white">
  <div class="w-[48px] flex justify-center">
    <svg width="16" height="16" viewBox="0 0 16 16"><path fill="#fff" d="M0 2.300l6.600-.9v6.200H0zM7.400 1.300L16 0v7.600H7.400zM0 8.400h6.600v6.200L0 13.700zM7.400 8.400H16V16l-8.600-1.300z"/></svg>
  </div>
  <div class="relative w-[288px] h-[40px] bg-[#f3f3f3] border-t border-[#9fd4f2] flex items-center overflow-hidden text-[#222]">
    <svg class="ml-[12px]" width="16" height="16" viewBox="0 0 16 16"><circle cx="10" cy="6" r="4.500" fill="none" stroke="#222" stroke-width="1.100"/><path d="M6.700 9.300L1 15" stroke="#222" stroke-width="1.200"/></svg>
    <span class="ml-[12px] text-[15px]">Пошук</span>
    <svg class="absolute right-0 top-0" width="76" height="40" viewBox="0 0 76 40">
      <path d="M0 40c4-10 14-13 24-10 8 2 18 2 30-1 8-2 16 0 22 3v8z" fill="#2b9fc6"/>
      <path d="M12 31c5-3 10-3 14 0-4 2-9 2-14 0zM38 32c6-3 14-3 20 0-6 2-14 2-20 0z" fill="#e9f6fa"/>
      <path d="M20 30C24 18 38 8 52 8c8 0 16 2 22 6-6 2-12 2-18 6-10 6-24 10-36 10z" fill="#6d7fa8"/>
      <path d="M28 27c8-1 18-6 26-10M33 21c6-1 13-5 20-9" stroke="#c9d2e4" fill="none"/>
      <path d="M40 9c-2-3-1-6 0-8 3 2 4 4 5 7z" fill="#3e4f78"/>
    </svg>
  </div>
  <div class="flex h-[40px] items-center">
    <div class="w-[49px] flex justify-center">
      <svg width="16" height="20" viewBox="0 0 16 20" fill="none" stroke="#fff"><rect x="2.500" y="6.500" width="9" height="7"/><path d="M2 3h10M2 17h10M14.500 2v3M14.500 8v3M14.500 14v3"/></svg>
    </div>
    <div class="w-[49px] h-[40px] flex justify-center items-center border-b-2 border-[#6fa8d6]"><svg class="w-[26px] h-[26px]"><use href="#edge"/></svg></div>
    <div class="w-[49px] flex justify-center">
      <svg width="24" height="24" viewBox="0 0 24 24"><path d="M1 3h9l2 3h11v17H1z" fill="#f5c542"/><path d="M1 9h22v14H1z" fill="#ffd969"/><rect x="8" y="15" width="8" height="5" fill="#3f7fc4"/></svg>
    </div>
    <div class="w-[49px] flex justify-center">
      <svg width="24" height="26" viewBox="0 0 24 26"><path d="M8 6V3c0-3 8-3 8 0v3" fill="none" stroke="#9ed6f5" stroke-width="1.600"/><rect x="1" y="6" width="22" height="19" rx="3" fill="#f1f1f1"/><path fill="#f25022" d="M7 10h4.500v4.500H7z"/><path fill="#7fba00" d="M12.500 10H17v4.500h-4.500z"/><path fill="#00a4ef" d="M7 15.500h4.500V20H7z"/><path fill="#ffb900" d="M12.500 15.500H17V20h-4.500z"/></svg>
    </div>
    <div class="w-[49px] flex justify-center">
      <svg width="26" height="22" viewBox="0 0 26 22"><path d="M1 8L13 0l12 8v14H1z" fill="#0f7fd0"/><path d="M1 8l12 8 12-8v14H1z" fill="#33a8ee"/><path d="M5 7l8-5 8 5-8 6z" fill="#e8f5fd"/></svg>
    </div>
    <div class="w-[49px] h-[40px] flex justify-center items-center bg-[#3f4f5c] border-b-2 border-[#6fa8d6]"><svg class="w-[24px] h-[24px]"><use href="#hw"/></svg></div>
  </div>
  <div class="ml-auto flex items-center h-[40px]">
    <svg width="26" height="22" viewBox="0 0 26 22"><circle cx="17" cy="8" r="6" fill="#f0a83a"/><path d="M4 21c-5 0-5-7 0-8 1-5 9-6 11-1 6-1 9 3 8 6 0 2-1 3-3 3z" fill="#cfe0f2"/></svg>
    <span class="ml-[6px] text-[13px]">8°C</span>
    <span class="ml-[9px] text-[13px]">Mostly cloudy</span>
    <svg class="ml-[27px]" width="12" height="8" viewBox="0 0 12 8"><path d="M1 7l5-5.500L11 7" fill="none" stroke="#fff" stroke-width="1.100"/></svg>
    <svg class="ml-[12px]" width="14" height="18" viewBox="0 0 14 18" fill="none" stroke="#fff"><path d="M2 3c3-2 7-2 10 0M2 15c3 2 7 2 10 0"/><rect x="1.500" y="6" width="7" height="6"/><path d="M9 8l4-2v6l-4-2"/></svg>
    <svg class="ml-[10px]" width="16" height="14" viewBox="0 0 16 14" fill="none" stroke="#d8d8d8"><path d="M1 13C2 7 7 2 15 1M4 13c1-4 5-7 11-8M7 13c1-2 4-4 8-4"/><circle cx="14" cy="12.500" r="1" fill="#fff"/></svg>
    <svg class="ml-[7px]" width="16" height="14" viewBox="0 0 16 14" fill="none" stroke="#fff"><path d="M1 5v4h2.500L7 12.500v-11L3.500 5z"/><path d="M10 4.500c1.500 1.500 1.500 3.500 0 5M12.500 2.500c2.500 2.500 2.500 6.500 0 9"/></svg>
    <span class="ml-[10px] text-[12px]">ENG</span>
    <div class="ml-[11px] w-[58px] text-center text-[12px] leading-[18px]">12:08<br>29.12.2023</div>
    <svg class="ml-[16px]" width="16" height="16" viewBox="0 0 16 16" fill="none" stroke="#fff"><path d="M.5 1.500h15v11h-6l-3 2.500v-2.500h-6z"/></svg>
    <div class="ml-[20px] mr-[4px] w-px h-[40px] bg-[#4a5866]"></div>
  </div>
</div>
</body>
</html>
